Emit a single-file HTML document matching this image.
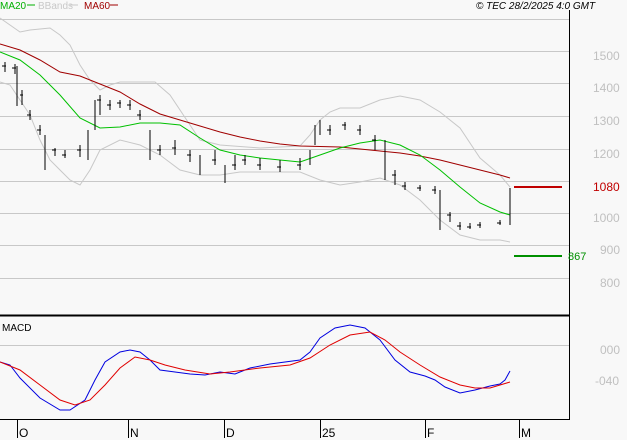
<!DOCTYPE html>
<html><head><style>
body{margin:0;background:#f8f8f8;width:627px;height:440px;overflow:hidden;font-family:"Liberation Sans",sans-serif}
svg{display:block}
</style></head><body>
<svg width="627" height="440" xmlns="http://www.w3.org/2000/svg" font-family="Liberation Sans, sans-serif">
<rect width="627" height="440" fill="#f8f8f8"/>
<g stroke="#c8c8c8" stroke-width="1">
<line x1="0" y1="19.5" x2="569" y2="19.5"/>
<line x1="0" y1="51.5" x2="569" y2="51.5"/>
<line x1="0" y1="83.5" x2="569" y2="83.5"/>
<line x1="0" y1="116.5" x2="569" y2="116.5"/>
<line x1="0" y1="149.5" x2="569" y2="149.5"/>
<line x1="0" y1="181.5" x2="569" y2="181.5"/>
<line x1="0" y1="213.5" x2="569" y2="213.5"/>
<line x1="0" y1="245.5" x2="569" y2="245.5"/>
<line x1="0" y1="278.5" x2="569" y2="278.5"/>
<line x1="0" y1="345.5" x2="569" y2="345.5"/>
</g>
<g fill="#c0c0c0" font-size="12">
<text x="593" y="60">1500</text><text x="593" y="92">1400</text><text x="593" y="125">1300</text>
<text x="593" y="158">1200</text><text x="593" y="222">1000</text><text x="600" y="254">900</text>
<text x="600" y="287">800</text><text x="600" y="354">000</text><text x="595" y="385">-040</text>
</g>
<g fill="none" stroke-width="1">
<polyline stroke="#c8c8c8" points="0,18 20,32 30,30 50,28 60,35 70,45 80,65 90,80 100,90 110,85 120,82 155,82 170,95 190,125 200,140 220,145 260,148 300,146 310,135 320,120 330,112 340,108 360,108 380,100 400,96 420,100 440,112 460,128 480,158 500,175 510,187"/>
<polyline stroke="#c8c8c8" points="0,82 10,85 20,100 30,115 40,140 50,160 60,170 70,180 80,185 90,170 100,150 120,140 140,145 160,155 180,170 200,175 220,175 240,172 300,172 320,180 340,185 360,182 380,178 400,185 420,200 440,220 460,235 480,240 500,240 510,242"/>
<polyline stroke="#a00000" points="0,44 20,50 40,60 60,72 80,76 100,84 120,92 140,104 160,114 180,120 200,126 220,132 240,137 260,141 280,144 300,146 340,147 360,149 380,151 400,153 420,156 440,160 460,165 480,170 500,175 510,178"/>
<polyline stroke="#00c000" points="0,52 20,60 40,75 60,95 80,118 100,128 120,127 140,123 160,123 180,125 200,138 220,150 240,155 260,158 280,160 300,162 320,155 340,148 360,143 380,140 400,145 420,155 440,170 460,187 480,203 500,212 510,215"/>
<path stroke="#000" d="M5,62v10M15,64v10M17,66v40M22,90v15M30,110v10M40,125v10M45,135v35M55,148v8M65,150v8M80,145v12M88,130v30M95,100v30M100,95v20M110,100v10M120,100v8M130,100v10M140,110v10M150,130v30M160,145v10M175,140v15M190,150v12M200,155v20M215,150v15M225,165v18M235,155v15M245,155v10M260,158v12M280,160v12M300,158v12M310,150v15M315,125v20M320,120v15M330,125v10M345,122v8M360,125v10M375,135v15M385,140v40M395,170v15M405,182v8M420,185v6M435,186v8M440,190v40M450,212v10M460,222v8M470,223v6M480,222v6M500,220v5M510,188v37"/>
<path stroke="#000" d="M2,66h4M12,68h4M20,95h3M27,115h4M37,130h4M52,150h4M62,155h4M77,150h4M97,100h4M107,105h4M117,103h4M127,105h4M137,115h4M157,150h4M172,148h4M187,155h4M212,160h4M232,165h4M242,160h4M257,165h4M277,167h4M297,165h4M327,130h4M342,125h4M357,130h4M372,140h4M392,175h4M402,186h4M417,188h4M432,190h4M447,215h4M457,226h4M467,227h4M477,225h4M497,223h4"/>
<polyline stroke="#0000e0" points="0,362 10,365 20,378 40,398 60,410 70,410 85,400 95,380 105,362 120,352 130,350 140,352 150,360 160,370 175,372 190,374 205,375 220,372 235,374 250,368 270,364 300,360 310,352 320,338 335,328 350,325 365,328 380,340 395,360 410,372 425,376 435,380 445,387 460,393 475,390 490,386 500,384 505,380 510,371"/>
<polyline stroke="#e00000" points="0,362 20,370 40,385 60,400 75,405 90,400 105,385 120,368 135,357 150,360 165,365 185,370 210,374 230,372 260,368 290,365 310,358 330,345 350,335 370,332 385,340 400,352 420,365 440,377 460,385 475,388 490,388 510,382"/>
</g>
<line x1="569.5" y1="10" x2="569.5" y2="420" stroke="#000"/>
<line x1="0" y1="315.5" x2="570" y2="315.5" stroke="#000" stroke-width="2"/>
<line x1="0" y1="419.5" x2="570" y2="419.5" stroke="#000"/>
<g stroke="#000"><path d="M17.5,420v18M128.5,420v18M224.5,420v18M320.5,420v18M425.5,420v18M519.5,420v18"/></g>
<g font-size="12" fill="#000"><text x="19" y="437">O</text><text x="130" y="437">N</text><text x="226" y="437">D</text><text x="322" y="437">25</text><text x="427" y="437">F</text><text x="521" y="437">M</text></g>
<line x1="514" y1="187" x2="562" y2="187" stroke="#c00000" stroke-width="2"/>
<text x="593" y="191" font-size="12" fill="#c00000">1080</text>
<line x1="514" y1="256" x2="562" y2="256" stroke="#009000" stroke-width="2"/>
<text x="568" y="260" font-size="11" fill="#009000">867</text>
<text x="2" y="331" font-size="10" fill="#000">MACD</text>
<g font-size="10">
<text x="0" y="9" fill="#00b000">MA20</text><line x1="27" y1="5" x2="35" y2="5" stroke="#00b000"/>
<text x="38" y="9" fill="#c8c8c8">BBands</text><line x1="70" y1="5" x2="78" y2="5" stroke="#c8c8c8"/>
<text x="84" y="9" fill="#a00000">MA60</text><line x1="110" y1="5" x2="118" y2="5" stroke="#a00000"/>
<text x="476" y="9" fill="#000" font-style="italic">© TEC 28/2/2025 4:0 GMT</text>
</g>
</svg>
</body></html>
